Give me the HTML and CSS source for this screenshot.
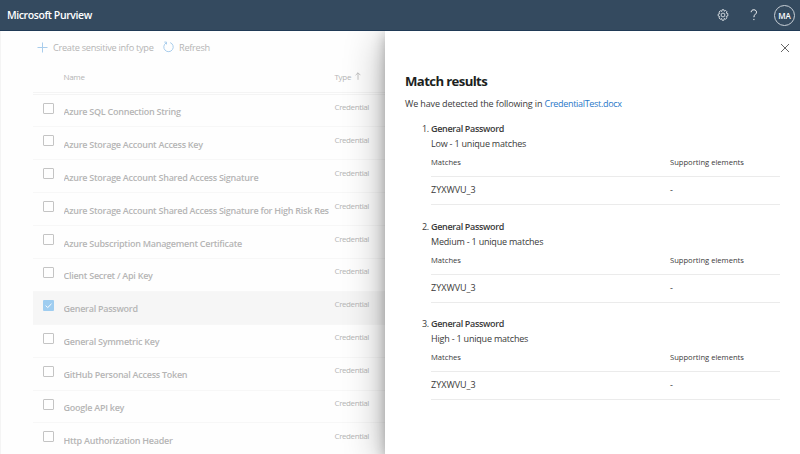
FILE: index.html
```html
<!DOCTYPE html>
<html lang="en">
<head>
    <meta charset="UTF-8">
    <meta name="viewport" content="width=device-width, initial-scale=1.0">
    <title>Microsoft Purview</title>
    <link rel="stylesheet" href="styles.css">
</head>
<body>

    <header class="topbar">
        <span class="brand">Microsoft Purview</span>
        <div class="topbar-actions">
            <svg class="gear" viewBox="0 0 12 12" width="12" height="12">
                <path d="M5 .8h2l.3 1.500 1.300-.9L10 2.800l-.8 1.300 1.600.4v2.500l-1.600.4.8 1.400-1.400 1.400-1.300-.9L7 11.200H5l-.4-1.700-1.300.8L2 8.900l.8-1.300L1.200 7V5l1.600-.4L2 3.100l1.300-1.400 1.400.8z"/>
                <circle cx="6" cy="6" r="1.900"/>
            </svg>
            <svg class="help" viewBox="0 0 8 12" width="8" height="12">
                <path d="M1.2 3.2C1.2 1.6 2.3.8 3.8.8s2.7.9 2.7 2.4C6.500 5.200 3.900 5.300 3.900 8.200M3.900 9.900v1.200"/>
            </svg>
            <span class="avatar">MA</span>
        </div>
    </header>

    <main class="page">
        <div class="toolbar">
            <svg class="plus" viewBox="0 0 11 11" width="11" height="11"><path d="M5.500 0.500v10M0.500 5.500h10"/></svg>
            <span class="create">Create sensitive info type</span>
            <svg class="refresh" viewBox="0 0 11 12" width="11" height="12"><path d="M7.200 1.600A4.700 4.700 0 1 1 3.200 1.900M1.300 1.100h2.200v2.300"/></svg>
            <span>Refresh</span>
        </div>

        <div class="list">
            <div class="list-head">
                <span class="head-name">Name</span>
                <span class="head-type">Type</span>
                <svg class="sort" viewBox="0 0 6 8" width="6" height="8"><path d="M3 7.800V.8M.6 3.200L3 .8l2.400 2.400"/></svg>
            </div>
            <div class="row"><i class="check"></i><span class="name">Azure SQL Connection String</span><span class="type">Credential</span></div>
            <div class="row"><i class="check"></i><span class="name">Azure Storage Account Access Key</span><span class="type">Credential</span></div>
            <div class="row"><i class="check"></i><span class="name">Azure Storage Account Shared Access Signature</span><span class="type">Credential</span></div>
            <div class="row"><i class="check"></i><span class="name">Azure Storage Account Shared Access Signature for High Risk Res</span><span class="type">Credential</span></div>
            <div class="row"><i class="check"></i><span class="name">Azure Subscription Management Certificate</span><span class="type">Credential</span></div>
            <div class="row"><i class="check"></i><span class="name">Client Secret / Api Key</span><span class="type">Credential</span></div>
            <div class="row selected">
                <i class="check"><svg viewBox="0 0 11 11" width="11" height="11"><path d="M2.700 5.600l2 2L8.500 3.800"/></svg></i>
                <span class="name">General Password</span><span class="type">Credential</span>
            </div>
            <div class="row"><i class="check"></i><span class="name">General Symmetric Key</span><span class="type">Credential</span></div>
            <div class="row"><i class="check"></i><span class="name">GitHub Personal Access Token</span><span class="type">Credential</span></div>
            <div class="row"><i class="check"></i><span class="name">Google API key</span><span class="type">Credential</span></div>
            <div class="row"><i class="check"></i><span class="name">Http Authorization Header</span><span class="type">Credential</span></div>
        </div>
    </main>

    <aside class="panel">
        <svg class="close" viewBox="0 0 10 10" width="10" height="10"><path d="M1 1l8 8M9 1L1 9"/></svg>
        <h1>Match results</h1>
        <p class="intro">We have detected the following in <a>CredentialTest.docx</a></p>

        <section class="result">
            <span class="num">1.</span>
            <div class="detail">
                <h2>General Password</h2>
                <p>Low - 1 unique matches</p>
                <div class="match-head"><span>Matches</span><span>Supporting elements</span></div>
                <div class="match-row"><span>ZYXWVU_3</span><span>-</span></div>
            </div>
        </section>
        <section class="result">
            <span class="num">2.</span>
            <div class="detail">
                <h2>General Password</h2>
                <p>Medium - 1 unique matches</p>
                <div class="match-head"><span>Matches</span><span>Supporting elements</span></div>
                <div class="match-row"><span>ZYXWVU_3</span><span>-</span></div>
            </div>
        </section>
        <section class="result">
            <span class="num">3.</span>
            <div class="detail">
                <h2>General Password</h2>
                <p>High - 1 unique matches</p>
                <div class="match-head"><span>Matches</span><span>Supporting elements</span></div>
                <div class="match-row"><span>ZYXWVU_3</span><span>-</span></div>
            </div>
        </section>
    </aside>

</body>
</html>
```
FILE: styles.css
```css
* {
    box-sizing: border-box;
}
body {
    margin: 0;
    height: 454px;
    overflow: hidden;
    position: relative;
    background-color: #fefefe;
    color: #3a3a3a;
    font-family: "Open Sans", "Noto Sans", sans-serif;
    font-size: 9px;
}
h1, h2, p {
    margin: 0;
}
svg {
    display: block;
    flex: none;
    fill: none;
    stroke: currentColor;
}
.topbar {
    height: 31px;
    display: flex;
    align-items: center;
    justify-content: space-between;
    padding: 0 5px 0 7px;
    background-color: #344a5f;
    border-bottom: 1px solid #203a56;
    color: #fff;
}
.brand {
    font-size: 10.5px;
    font-weight: 600;
    letter-spacing: -0.41px;
}
.topbar-actions {
    display: flex;
    align-items: center;
}
.gear {
    margin-right: 21px;
    color: #dde2e7;
    stroke-width: 0.9;
}
.help {
    margin-right: 16px;
}
.avatar {
    width: 21px;
    height: 21px;
    border: 1px solid #c9d0d7;
    border-radius: 50%;
    font-size: 8px;
    font-weight: 600;
    line-height: 19px;
    text-align: center;
}

/* list behind the panel */
.page {
    height: 423px;
    overflow: hidden;
    border-left: 1px solid #f4f4f4;
    padding-left: 32px;
    color: #b5b5b5;
}
.toolbar {
    display: flex;
    align-items: center;
    height: 32px;
    padding-left: 4px;
    font-size: 9.2px;
    letter-spacing: -0.28px;
}
.plus, .refresh {
    color: #a9cdec;
}
.plus {
    margin-right: 5px;
}
.create {
    width: 110px;
    white-space: nowrap;
}
.refresh {
    margin-right: 5px;
}
.list-head {
    display: flex;
    align-items: center;
    height: 31.5px;
    padding: 0 0 2px 30.5px;
    border-bottom: 3px double #f4f4f4;
    font-size: 8px;
    letter-spacing: -0.3px;
}
.head-name {
    width: 271px;
}
.sort {
    margin-left: 4px;
    stroke-width: 0.8;
}
.row {
    display: flex;
    height: 32.9px;
    padding-left: 10px;
    border-bottom: 1px solid #f7f7f7;
}
.check {
    width: 11px;
    height: 11px;
    margin: 8px 9.5px 0 0;
    border: 1px solid #c4c4c4;
    border-radius: 1px;
}
.name {
    width: 267px;
    margin-right: 4px;
    padding-top: 10.5px;
    overflow: hidden;
    white-space: nowrap;
    font-weight: 600;
    line-height: 13px;
    letter-spacing: -0.26px;
}
.type {
    padding-top: 6.5px;
    font-size: 8px;
    line-height: 12px;
    letter-spacing: -0.4px;
}
.selected {
    background-color: #f6f6f6;
}
.selected .check {
    border: none;
    background-color: #9fcdf0;
    color: #fff;
}

/* match results panel */
.panel {
    position: absolute;
    top: 31px;
    left: 385px;
    width: 415px;
    height: 423px;
    padding: 0 20px;
    background-color: #fff;
    box-shadow: 0 8px 38px rgba(0, 0, 0, 0.32), 0 4px 12px rgba(0, 0, 0, 0.25);
    clip-path: inset(0 0 0 -60px);
}
.close {
    margin: 12px -10px 0 auto;
    color: #666;
}
h1 {
    margin-top: 18px;
    font-size: 13.2px;
    line-height: 20px;
    letter-spacing: -0.63px;
    color: #201f1e;
}
.intro {
    margin-top: 7px;
    line-height: 12px;
    letter-spacing: -0.13px;
}
.intro a {
    color: #2a78c8;
    letter-spacing: -0.31px;
}
.result {
    display: flex;
    height: 97.7px;
}
.intro + .result {
    margin-top: 13px;
}
.num {
    width: 26px;
    padding-right: 2px;
    text-align: right;
    line-height: 12px;
    letter-spacing: -0.2px;
}
.detail {
    flex: 1;
}
.detail h2 {
    font-size: 9px;
    font-weight: 600;
    line-height: 12px;
    letter-spacing: -0.34px;
}
.detail p {
    margin-top: 3px;
    line-height: 12px;
    letter-spacing: -0.2px;
}
.match-head, .match-row {
    display: grid;
    grid-template-columns: 239px 1fr;
    border-bottom: 1px solid #ebebeb;
}
.match-head {
    height: 27px;
    padding-top: 7px;
    font-size: 7.6px;
    line-height: 10px;
}
.match-row {
    height: 28px;
    padding-top: 7px;
    line-height: 12px;
}
```
